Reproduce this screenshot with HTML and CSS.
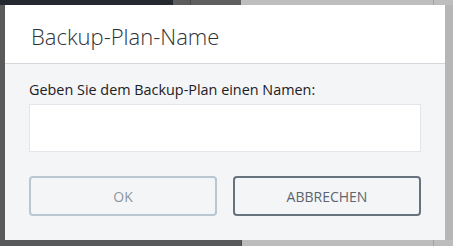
FILE: index.html
```html
<!DOCTYPE html>
<html lang="de">
<head>
    <meta charset="UTF-8">
    <meta name="viewport" content="width=device-width, initial-scale=1.0">
    <title>Backup-Plan-Name</title>
    <link rel="stylesheet" href="styles.css">
</head>
<body>
<div class="dialog">
    <div class="dialog-header">
        <h1 class="dialog-title">Backup-Plan-Name</h1>
    </div>
    <form class="dialog-body" onsubmit="return false">
        <label class="field-label" for="plan_name">Geben Sie dem Backup-Plan einen Namen:</label>
        <input type="text" id="plan_name" name="plan_name" class="field-input">

        <div class="button-row">
            <button type="submit" class="btn btn-disabled" disabled>OK</button>
            <button type="button" class="btn btn-secondary">ABBRECHEN</button>
        </div>
    </form>
</div>
</body>
</html>
```

FILE: styles.css
```css
* {
    margin: 0;
    padding: 0;
    box-sizing: border-box;
}

body {
    width: 453px;
    height: 246px;
    overflow: hidden;
    padding: 5px 8px 6px 5px;
    font-family: "Open Sans", sans-serif;
    background:
        linear-gradient(to right, #23292e 0, #23292e 173px, #5c5c5c 173px, #5c5c5c 190px, #484848 190px, #484848 191px, #5f5f5f 191px, #5f5f5f 241px, #bebebe 241px, #bebebe 433px, #a2a2a2 433px, #a2a2a2 434px, #bebebe 434px) top / 100% 5px no-repeat,
        linear-gradient(to right, #58595a 0, #58595a 241px, #4a4a4a 241px, #4a4a4a 242px, #bcbcbc 242px, #bcbcbc 433px, #a2a2a2 433px, #a2a2a2 434px, #bcbcbc 434px) bottom / 100% 6px no-repeat,
        linear-gradient(to right, #5a5a5a 0, #5a5a5a 5px, #b6b6b6 5px);
}

.dialog {
    width: 440px;
    height: 235px;
    display: flex;
    flex-direction: column;
    background-color: #f4f5f7;
}

.dialog-header {
    height: 59px;
    padding: 15px 26px 0;
    background-color: #fff;
    border-bottom: 1px solid #d3d6da;
}

.dialog-title {
    font-size: 22px;
    font-weight: 300;
    line-height: 32px;
    color: #2e3338;
}

.dialog-body {
    display: flex;
    flex-direction: column;
    padding: 16px 24px 0;
}

.field-label {
    font-size: 14.4px;
    line-height: 20px;
    color: #1c2024;
    margin-bottom: 4px;
}

.field-input {
    height: 48px;
    border: 1px solid #e2e5e9;
    background-color: #fff;
    font-family: inherit;
    font-size: 14px;
    padding: 0 12px;
    outline: none;
}

.button-row {
    display: flex;
    gap: 16px;
    margin-top: 24px;
}

.btn {
    flex: 1;
    height: 40px;
    border-radius: 4px;
    background-color: transparent;
    font-family: inherit;
    font-size: 14px;
    cursor: pointer;
}

.btn-disabled {
    border: 2px solid #bac6d0;
    color: #8d979f;
    cursor: default;
}

.btn-secondary {
    border: 2px solid #66737f;
    color: #5b6670;
}
```
